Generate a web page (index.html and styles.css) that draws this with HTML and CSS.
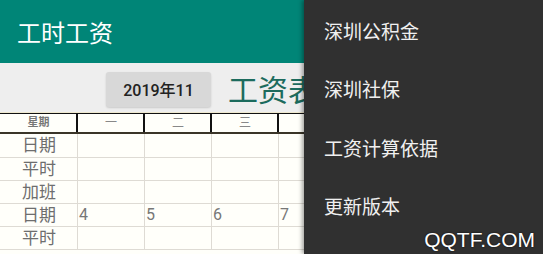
FILE: index.html
```html
<!DOCTYPE html>
<html lang="zh-CN">
<head>
    <meta charset="UTF-8">
    <meta name="viewport" content="width=device-width, initial-scale=1.0">
    <title>工时工资</title>
    <link rel="stylesheet" href="styles.css">
</head>
<body>
    <!-- 顶部标题栏 -->
    <header class="appbar">
        <h1 class="app-title">工时工资</h1>
    </header>

    <!-- 月份选择 -->
    <div class="toolbar">
        <button class="month-btn">2019年11</button>
        <span class="sheet-title">工资表</span>
    </div>

    <!-- 工资表 -->
    <div class="sheet">
        <div class="row head">
            <div class="cell label">星期</div>
            <div class="cell">一</div>
            <div class="cell">二</div>
            <div class="cell">三</div>
            <div class="cell"></div>
            <div class="cell"></div>
            <div class="cell"></div>
            <div class="cell"></div>
        </div>
        <div class="row first">
            <div class="cell label">日期</div>
            <div class="cell"></div><div class="cell"></div><div class="cell"></div><div class="cell"></div><div class="cell"></div><div class="cell"></div><div class="cell"></div>
        </div>
        <div class="row">
            <div class="cell label">平时</div>
            <div class="cell"></div><div class="cell"></div><div class="cell"></div><div class="cell"></div><div class="cell"></div><div class="cell"></div><div class="cell"></div>
        </div>
        <div class="row">
            <div class="cell label">加班</div>
            <div class="cell"></div><div class="cell"></div><div class="cell"></div><div class="cell"></div><div class="cell"></div><div class="cell"></div><div class="cell"></div>
        </div>
        <div class="row">
            <div class="cell label">日期</div>
            <div class="cell">4</div><div class="cell">5</div><div class="cell">6</div><div class="cell">7</div><div class="cell"></div><div class="cell"></div><div class="cell"></div>
        </div>
        <div class="row">
            <div class="cell label">平时</div>
            <div class="cell"></div><div class="cell"></div><div class="cell"></div><div class="cell"></div><div class="cell"></div><div class="cell"></div><div class="cell"></div>
        </div>
    </div>

    <!-- 弹出菜单 -->
    <ul class="menu">
        <li>深圳公积金</li>
        <li>深圳社保</li>
        <li>工资计算依据</li>
        <li>更新版本</li>
    </ul>

    <div class="watermark">QQTF.COM</div>
</body>
</html>
```

FILE: styles.css
```css
* {
    margin: 0;
    padding: 0;
    box-sizing: border-box;
    font-family: 'Roboto', 'Noto Sans CJK SC', sans-serif;
}

body {
    width: 543px;
    height: 254px;
    overflow: hidden;
    background-color: #fffffa;
    position: relative;
}

/* 标题栏 */
.appbar {
    height: 63px;
    background-color: #008577;
    display: flex;
    align-items: center;
    padding-left: 17px;
}

.app-title {
    color: #fff;
    font-size: 24px;
    font-weight: 400;
}

/* 月份选择 */
.toolbar {
    height: 50px;
    background-color: #eeeeee;
    border-bottom: 1px solid #efe9cf;
    display: flex;
    align-items: center;
    padding-left: 106px;
    gap: 17px;
    overflow: hidden;
}

.month-btn {
    flex-shrink: 0;
    width: 105px;
    height: 35px;
    border: none;
    border-radius: 3px;
    background-color: #d8d8d8;
    box-shadow: 0 1px 2px rgba(0, 0, 0, 0.15);
    color: #222;
    font-size: 16px;
    font-weight: 500;
    margin-top: 3px;
}

.sheet-title {
    color: #1c6b5d;
    font-size: 30px;
    white-space: nowrap;
}

/* 工资表 */
.sheet {
    width: 100%;
    overflow: hidden;
}

.row {
    display: grid;
    grid-template-columns: 78px repeat(7, 67px);
    height: 23px;
    border-bottom: 1px solid #dedbd4;
}

.row.first {
    height: 24px;
}

.cell {
    border-right: 1px solid #dedbd4;
    color: #777;
    font-size: 16px;
    line-height: 22px;
    padding-left: 1px;
}

.cell.label {
    text-align: center;
    font-size: 17px;
    color: #6e6e6e;
}

.row.head {
    height: 21px;
    border-top: 1px solid #111;
    border-bottom: 2px solid #3a3528;
}

.row.head .cell {
    border-right: 2px solid #111;
    text-align: center;
    font-size: 12px;
    line-height: 18px;
    color: #888;
}

.row.head .cell.label {
    font-weight: 700;
    font-size: 11px;
    color: #777;
}

/* 弹出菜单 */
.menu {
    position: absolute;
    top: 0;
    left: 304px;
    width: 239px;
    height: 254px;
    background-color: #303030;
    list-style: none;
    padding-top: 2px;
    box-shadow: -2px 0 4px rgba(0, 0, 0, 0.35);
}

.menu li {
    height: 58.5px;
    display: flex;
    align-items: center;
    padding-left: 20px;
    color: #f0f0f0;
    font-size: 19px;
    line-height: 1.2;
    font-family: 'Noto Sans CJK SC', sans-serif;
}

.watermark {
    position: absolute;
    right: 8px;
    bottom: 3px;
    color: #fff;
    font-family: 'Liberation Sans', sans-serif;
    font-size: 21px;
    line-height: 1.1;
    text-shadow: 0 0 2px rgba(0, 0, 0, 0.8);
}
```
